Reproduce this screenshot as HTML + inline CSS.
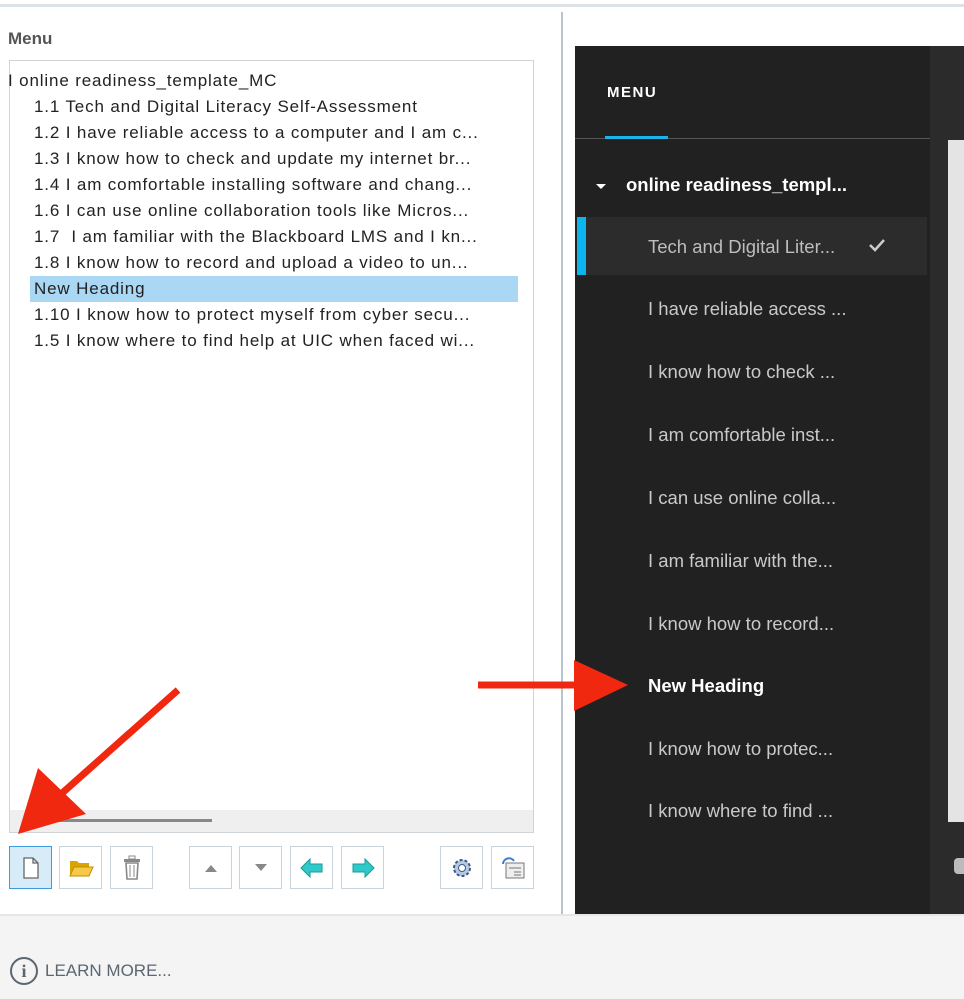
<!DOCTYPE html>
<html><head><meta charset="utf-8"><style>
*{margin:0;padding:0;box-sizing:border-box}
body{width:964px;height:999px;background:#fff;position:relative;overflow:hidden;font-family:"Liberation Sans",sans-serif}
.abs{position:absolute}
.li{position:absolute;left:34px;font-size:17px;color:#222;white-space:nowrap;line-height:26px;letter-spacing:0.85px}
.dk{position:absolute;left:648px;font-size:18.5px;color:#c9c9c9;white-space:nowrap;line-height:24px}
.btn{position:absolute;top:846px;width:43px;height:43px;border:1px solid #c9d3dc;background:#fff;display:flex;align-items:center;justify-content:center}
</style></head><body>
<div class="abs" style="left:0;top:4px;width:964px;height:3px;background:#dde2e6"></div>
<div class="abs" style="left:561px;top:12px;width:2px;height:903px;background:#b9c5ce"></div>
<div class="abs" style="left:8px;top:29px;font-size:17px;font-weight:bold;color:#555">Menu</div>
<div class="abs" style="left:9px;top:60px;width:525px;height:773px;border:1px solid #cfd4d8"></div>
<div class="abs" style="left:10px;top:810px;width:523px;height:22px;background:#efefef"></div>
<div class="abs" style="left:42px;top:819px;width:170px;height:3px;background:#888"></div>
<div class="abs" style="left:30px;top:276px;width:488px;height:26px;background:#a9d7f4"></div>
<div class="li" style="left:8px;top:68px">I online readiness_template_MC</div>
<div class="li" style="top:94px">1.1 Tech and Digital Literacy Self-Assessment</div>
<div class="li" style="top:120px">1.2 I have reliable access to a computer and I am c...</div>
<div class="li" style="top:146px">1.3 I know how to check and update my internet br...</div>
<div class="li" style="top:172px">1.4 I am comfortable installing software and chang...</div>
<div class="li" style="top:198px">1.6 I can use online collaboration tools like Micros...</div>
<div class="li" style="top:224px">1.7&nbsp; I am familiar with the Blackboard LMS and I kn...</div>
<div class="li" style="top:250px">1.8 I know how to record and upload a video to un...</div>
<div class="li" style="top:276px">New Heading</div>
<div class="li" style="top:302px">1.10 I know how to protect myself from cyber secu...</div>
<div class="li" style="top:328px">1.5 I know where to find help at UIC when faced wi...</div>

<div class="btn" style="left:9px;background:#d8ebf8;border-color:#3d9be0"><svg width="20" height="24"><path d="M3 2h9l5 5v15H3z M12 2v5h5" fill="#fff" stroke="#666" stroke-width="1.3"/></svg></div>
<div class="btn" style="left:59px"><svg width="26" height="22"><path d="M2 4h7l2 2h10v4H6L2 18z" fill="#d9a400"/><path d="M6 10h19l-4 9H2z" fill="#f7c948" stroke="#c08f00"/></svg></div>
<div class="btn" style="left:110px"><svg width="22" height="26"><rect x="3" y="4" width="16" height="3" fill="#888"/><rect x="8" y="1" width="6" height="3" fill="none" stroke="#888"/><path d="M5 8h12l-1 16H6z" fill="none" stroke="#888" stroke-width="1.6"/><path d="M9 10v12M13 10v12" stroke="#888"/></svg></div>
<div class="btn" style="left:189px"><svg width="12" height="8"><path d="M0 8L6 1L12 8z" fill="#888"/></svg></div>
<div class="btn" style="left:239px"><svg width="12" height="8"><path d="M0 0L6 7L12 0z" fill="#888"/></svg></div>
<div class="btn" style="left:290px"><svg width="24" height="20"><path d="M1 10L10 1v5h12v8H10v5z" fill="#2ec9c9" stroke="#1a9a9a"/></svg></div>
<div class="btn" style="left:341px"><svg width="24" height="20"><path d="M23 10L14 1v5H2v8h12v5z" fill="#2ec9c9" stroke="#1a9a9a"/></svg></div>
<div class="btn" style="left:440px"><svg width="26" height="26"><circle cx="13" cy="13" r="8" fill="#b8c8e0" stroke="#3a5a8a" stroke-width="2" stroke-dasharray="3 2"/><circle cx="13" cy="13" r="3.5" fill="#fff" stroke="#3a5a8a"/></svg></div>
<div class="btn" style="left:491px"><svg width="26" height="24"><rect x="6" y="7" width="18" height="15" fill="#eee" stroke="#777"/><path d="M9 12h12M14 16h7M14 19h7" stroke="#777"/><path d="M3 8a6 6 0 0 1 11-3" fill="none" stroke="#3b7fd0" stroke-width="2"/></svg></div>

<div class="abs" style="left:0;top:914px;width:964px;height:85px;background:#f4f4f4;border-top:2px solid #e3e7ea"></div>
<div class="abs" style="left:10px;top:957px;width:28px;height:28px;border:2px solid #5a6670;border-radius:50%;text-align:center;font:bold 18px 'Liberation Serif',serif;color:#5a6670;line-height:24px">i</div>
<div class="abs" style="left:45px;top:961px;font-size:17px;color:#5a6670">LEARN MORE...</div>

<div class="abs" style="left:575px;top:46px;width:389px;height:868px;background:#2b2b2b"></div>
<div class="abs" style="left:575px;top:46px;width:355px;height:868px;background:#212121"></div>
<div class="abs" style="left:948px;top:140px;width:16px;height:682px;background:#e4e4e4"></div>
<div class="abs" style="left:607px;top:84px;font-size:15px;font-weight:bold;color:#fff;letter-spacing:1.5px">MENU</div>
<div class="abs" style="left:575px;top:138px;width:355px;height:1px;background:#555"></div>
<div class="abs" style="left:605px;top:136px;width:63px;height:3px;background:#1ab4ea"></div>
<svg class="abs" style="left:596px;top:183px" width="12" height="8"><path d="M0 1h10L5 6z" fill="#fff"/></svg>
<div class="abs" style="left:626px;top:174px;font-size:18.5px;font-weight:bold;color:#fff;white-space:nowrap">online readiness_templ...</div>
<div class="abs" style="left:577px;top:217px;width:350px;height:58px;background:#2c2c2c"></div>
<div class="abs" style="left:577px;top:217px;width:9px;height:58px;background:#0bb5ee"></div>
<div class="dk" style="top:235px;color:#bdbdbd">Tech and Digital Liter...</div>
<svg class="abs" style="left:868px;top:238px" width="18" height="14"><path d="M2 7l5 5L16 2" fill="none" stroke="#ccc" stroke-width="2.5"/></svg>
<div class="dk" style="top:297px">I have reliable access ...</div>
<div class="dk" style="top:360px">I know how to check ...</div>
<div class="dk" style="top:423px">I am comfortable inst...</div>
<div class="dk" style="top:486px">I can use online colla...</div>
<div class="dk" style="top:549px">I am familiar with the...</div>
<div class="dk" style="top:612px">I know how to record...</div>
<div class="dk" style="top:674px;color:#fff;font-weight:bold">New Heading</div>
<div class="dk" style="top:737px">I know how to protec...</div>
<div class="dk" style="top:799px">I know where to find ...</div>
<div class="abs" style="left:954px;top:858px;width:10px;height:16px;background:#bbb;border-radius:4px 0 0 4px"></div>

<svg class="abs" style="left:0;top:0" width="964" height="999">
<path d="M178 690L60 795" stroke="#f02810" stroke-width="7"/>
<path d="M18 834L38 768L86 814z" fill="#f02810"/>
<path d="M478 685H585" stroke="#f02810" stroke-width="7"/>
<path d="M628 685L574 660V711z" fill="#f02810"/>
</svg>
</body></html>
